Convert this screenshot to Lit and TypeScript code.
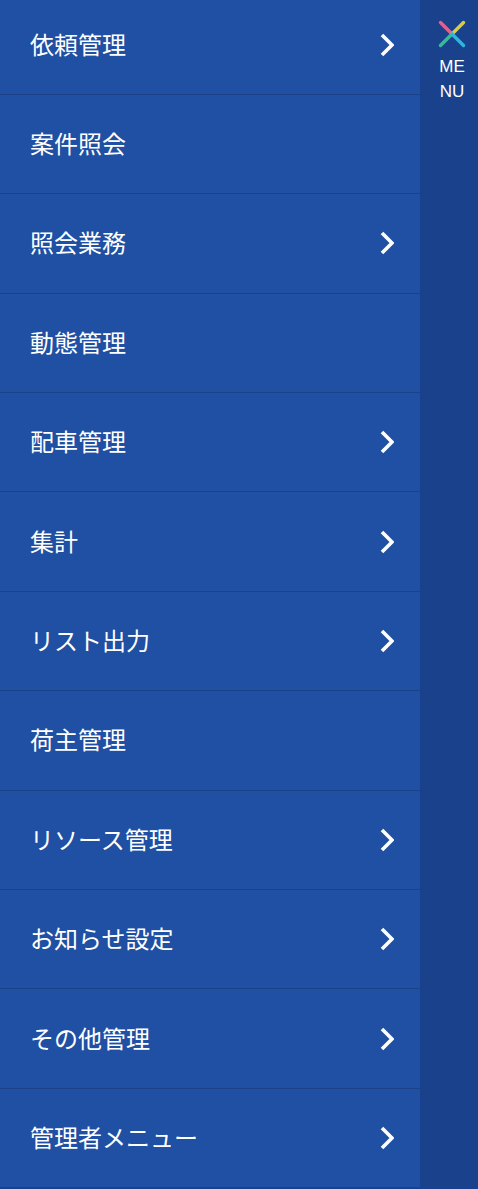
import { LitElement, html, css, svg } from "lit";
import { customElement } from "lit/decorators.js";

const items: [string, boolean][] = [
  ["依頼管理", true],
  ["案件照会", false],
  ["照会業務", true],
  ["動態管理", false],
  ["配車管理", true],
  ["集計", true],
  ["リスト出力", true],
  ["荷主管理", false],
  ["リソース管理", true],
  ["お知らせ設定", true],
  ["その他管理", true],
  ["管理者メニュー", true],
];

@customElement("app-root")
export class AppRoot extends LitElement {
  static styles = css`
    :host {
      display: flex;
      width: 478px;
      height: 1189px;
      overflow: hidden;
      background: #1a428c;
      font-family: "Liberation Sans", "Noto Sans CJK JP", sans-serif;
      color: #fff;
    }
    .list {
      width: 420px;
      flex: none;
      margin: -4.6px 0 0;
      padding: 0;
      list-style: none;
      background: #1f50a3;
      align-self: flex-start;
    }
    .row {
      height: 99.4px;
      box-sizing: border-box;
      padding: 0 26px 0 30px;
      display: flex;
      align-items: center;
      justify-content: space-between;
      border-bottom: 1px solid #1b4288;
      font-size: 24px;
    }
    .name {
      margin-top: -3px;
    }
    .chev {
      width: 14px;
      height: 24px;
      display: block;
    }
    .side {
      flex: 1;
      display: flex;
      flex-direction: column;
      align-items: center;
      padding: 20px 0 0 6px;
    }
    .x {
      width: 28px;
      height: 28px;
      display: block;
    }
    .label {
      margin-top: 7px;
      width: 30px;
      font-size: 17px;
      line-height: 24.5px;
      text-align: center;
      word-break: break-all;
    }
  `;

  render() {
    return html`
      <ul class="list">
        ${items.map(
          ([t, c]) => html`<li class="row">
            <span class="name">${t}</span>
            ${c
              ? html`<svg class="chev" viewBox="0 0 14 24">
                  <path d="M2 2 L12 12 L2 22" fill="none" stroke="#fff" stroke-width="3.6" />
                </svg>`
              : ""}
          </li>`
        )}
      </ul>
      <div class="side">
        <svg class="x" viewBox="0 0 28 28">
          ${svg`
            <g fill="none" stroke-width="3.4" stroke-linecap="round">
              <line x1="2.5" y1="2.5" x2="14" y2="14" stroke="#e4618f"/>
              <line x1="25.5" y1="2.5" x2="14" y2="14" stroke="#dccb3f"/>
              <line x1="2.5" y1="25.5" x2="14" y2="14" stroke="#34bd92"/>
              <line x1="25.5" y1="25.5" x2="14" y2="14" stroke="#33b3de"/>
            </g>`}
        </svg>
        <div class="label">MENU</div>
      </div>
    `;
  }
}
